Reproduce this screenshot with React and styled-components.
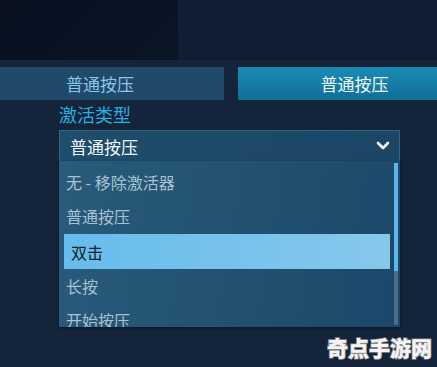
import React from "react";
import styled, { createGlobalStyle } from "styled-components";

const GlobalStyle = createGlobalStyle`
  html, body {
    margin: 0;
    padding: 0;
    background: #14243a;
    font-family: "Noto Sans CJK SC", "Noto Sans", sans-serif;
  }
`;

const options = ["无 - 移除激活器", "普通按压", "双击", "长按", "开始按压"];

const App = () => {
  return (
    <Page>
      <GlobalStyle />
      <TopBar>
        <DarkPanel />
      </TopBar>
      <ButtonRow>
        <ModeButton>普通按压</ModeButton>
        <ModeButton active>普通按压</ModeButton>
      </ButtonRow>
      <Section>
        <Label>激活类型</Label>
        <Select>
          <span>普通按压</span>
          <svg width="14" height="10" viewBox="0 0 14 10">
            <path
              d="M2 2 L7 7 L12 2"
              fill="none"
              stroke="#ffffff"
              strokeWidth="2.6"
              strokeLinecap="round"
              strokeLinejoin="round"
            />
          </svg>
        </Select>
        <List>
          <Items>
            {options.map((o) => (
              <Item key={o} selected={o === "双击"}>
                {o}
              </Item>
            ))}
          </Items>
          <Track>
            <Thumb />
          </Track>
        </List>
      </Section>
      <Watermark>奇点手游网</Watermark>
    </Page>
  );
};

export default App;

const Page = styled.div`
  position: relative;
  width: 437px;
  height: 367px;
  overflow: hidden;
  background: #14243a;
`;

const TopBar = styled.div`
  height: 60px;
  background: #0f1f31;
  display: flex;
`;

const DarkPanel = styled.div`
  width: 178px;
  background: linear-gradient(135deg, #081020, #0a1526);
`;

const ButtonRow = styled.div`
  margin-top: 7px;
  margin-left: -24px;
  height: 33px;
  display: flex;
  gap: 14px;
`;

const ModeButton = styled.div`
  flex: 0 0 ${(p) => (p.active ? "233px" : "248px")};
  display: flex;
  align-items: center;
  justify-content: center;
  font-size: 17px;
  color: ${(p) => (p.active ? "#f2f8fc" : "#8cc6ea")};
  background: ${(p) =>
    p.active
      ? "linear-gradient(180deg, #1a8cb6 0%, #106f98 100%)"
      : "#1f4a69"};
`;

const Section = styled.div`
  padding-left: 59px;
  width: 341px;
  display: flex;
  flex-direction: column;
`;

const Label = styled.div`
  height: 30px;
  line-height: 28px;
  font-size: 18px;
  color: #25aee0;
`;

const Select = styled.div`
  height: 31px;
  box-sizing: border-box;
  border: 1px solid #2f6585;
  border-bottom: none;
  background: linear-gradient(90deg, #1f4d6c, #1c4566);
  display: flex;
  align-items: center;
  justify-content: space-between;
  padding: 0 9px 0 10px;
  font-size: 17px;
  color: #f4f8fb;
  box-shadow: 0 1px 0 #183a55;
`;

const List = styled.div`
  height: 166px;
  overflow: hidden;
  display: flex;
  background: linear-gradient(100deg, #2a5b7b 0%, #225171 50%, #1b486a 100%);
  box-shadow: 0 1px 3px rgba(0, 0, 0, 0.4);
`;

const Items = styled.div`
  flex: 1;
  padding: 4px 0 0 5px;
  display: flex;
  flex-direction: column;
`;

const Item = styled.div`
  height: 34px;
  flex-shrink: 0;
  display: flex;
  align-items: center;
  padding-left: ${(p) => (p.selected ? "7px" : "2px")};
  font-size: 16px;
  color: ${(p) => (p.selected ? "#10202c" : "#a8c2d4")};
  background: ${(p) =>
    p.selected ? "linear-gradient(90deg, #67bcec, #86c8ec)" : "none"};
  ${(p) => p.selected && "height: 35px; margin-top: 1px;"}
`;

const Track = styled.div`
  width: 4px;
  margin: 2px 2px 2px 4px;
  background: #4b6f88;
  border-radius: 1px;
`;

const Thumb = styled.div`
  height: 108px;
  background: #5fb6ec;
`;

const Watermark = styled.div`
  position: absolute;
  right: 5px;
  bottom: 5px;
  font-size: 21px;
  font-weight: 900;
  color: #f4f4f4;
  -webkit-text-stroke: 1.5px #8a8a8a;
  paint-order: stroke fill;
`;
